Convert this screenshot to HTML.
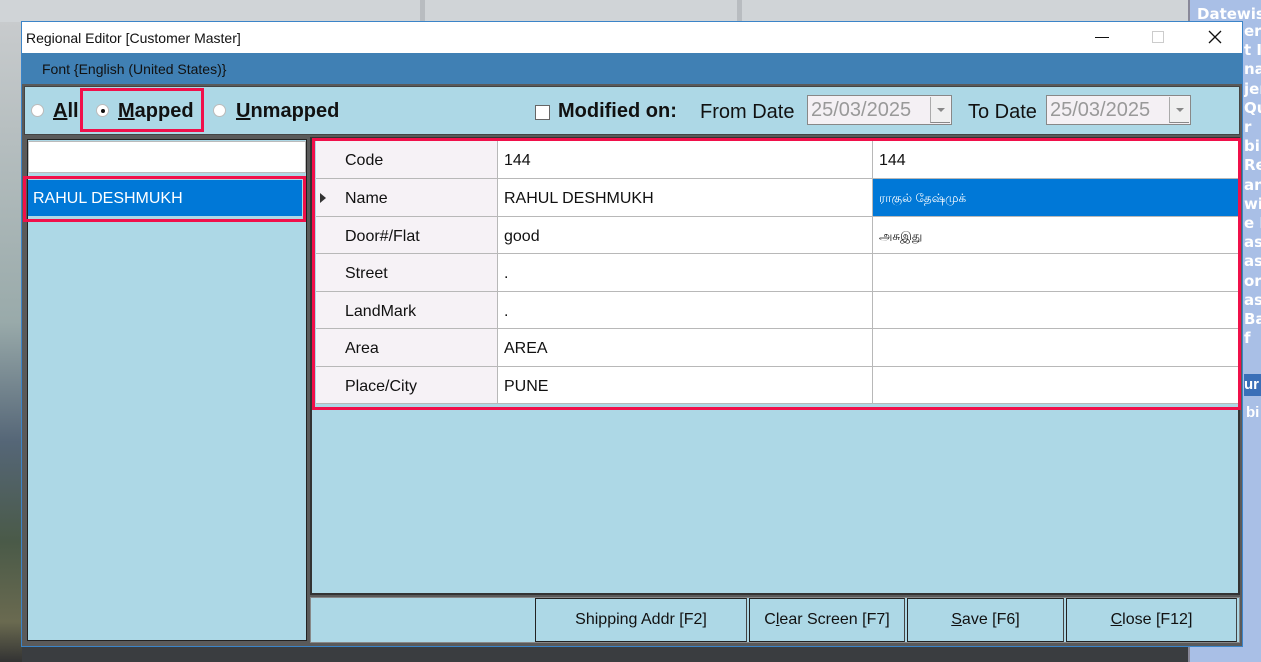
<!DOCTYPE html>
<html><head><meta charset="utf-8"><style>
*{margin:0;padding:0;box-sizing:border-box}
body{width:1261px;height:662px;overflow:hidden;position:relative;font-family:"Liberation Sans",sans-serif;background:#cfd3d6}
.a{position:absolute}
.t{font-size:16px;color:#111}
.row{position:absolute;left:316px;width:922px;border-bottom:1px solid #b8b8b8;background:#fff}
.c1{position:absolute;left:0;width:182px;height:100%;background:#f6f2f6;border-right:1px solid #b8b8b8}
.c2{position:absolute;left:182px;width:375px;height:100%;background:#fff;border-right:1px solid #b8b8b8}
.c3{position:absolute;left:557px;width:365px;height:100%;background:#fff}
.lbl{position:absolute;left:29px;top:11px;font-size:16px;color:#111}
.val{position:absolute;left:6px;top:11px;font-size:16px;color:#111}
.btn{position:absolute;top:598px;height:44px;border:1px solid #222;border-right-color:#444;background:#add8e6;font-size:16px;text-align:center;line-height:42px;color:#111}
.rb{position:absolute;width:13px;height:13px;border-radius:50%;background:#fff;border:1px solid #bbb}
.opt{position:absolute;top:100px;font-size:20px;font-weight:bold;color:#111}
</style></head><body>
<div class="a" style="left:0;top:0;width:1190px;height:22px;background:#d0d4d7"></div>
<div class="a" style="left:420px;top:0;width:5px;height:22px;background:#b8bcc0"></div>
<div class="a" style="left:737px;top:0;width:5px;height:22px;background:#b8bcc0"></div>
<div class="a" style="left:0;top:22px;width:22px;height:640px;background:linear-gradient(#c8cbcd,#9aa 300px,#567 420px,#4a5a48 520px,#6a6a50 600px,#333)"></div>
<div class="a" style="left:22px;top:646px;width:1170px;height:16px;background:#3a3d40"></div>
<div class="a" style="left:1188px;top:0;width:73px;height:662px;background:#a9bfe6;border-left:2px solid #889"></div>
<div class="a" style="left:1197px;top:5px;color:#fff;font-weight:bold;font-size:15px;font-family:'DejaVu Sans',sans-serif">Datewis</div>
<div class="a" style="left:1244px;top:22px;width:17px;color:#fff;font-weight:bold;font-size:15px;line-height:19.2px;font-family:'DejaVu Sans',sans-serif;overflow:hidden;white-space:nowrap">ery<br>t I<br>na<br>jen<br>Qu<br>r<br>bi<br>Re<br>an<br>wis<br>e R<br>as<br>as<br>or<br>as<br>Ba<br>f</div>
<div class="a" style="left:1244px;top:374px;width:17px;height:22px;background:#3a6fb8;color:#fff;font-weight:bold;font-size:15px;line-height:22px">ur</div>
<div class="a" style="left:1246px;top:404px;color:#fff;font-weight:bold;font-size:15px">bi</div>

<div class="a" style="left:21px;top:21px;width:1222px;height:626px;border:1px solid #3b84c8;background:#5a5a5a"></div>
<div class="a" style="left:22px;top:22px;width:1220px;height:31px;background:#fff"></div>
<div class="a" style="left:26px;top:30px;font-size:14px;color:#111">Regional Editor [Customer Master]</div>
<div class="a" style="left:1095px;top:37px;width:14px;height:1px;background:#111"></div>
<div class="a" style="left:1152px;top:31px;width:12px;height:12px;border:1px solid #ccc"></div>
<svg class="a" style="left:1208px;top:30px" width="14" height="14"><path d="M1 1L13 13M13 1L1 13" stroke="#111" stroke-width="1.3"/></svg>
<div class="a" style="left:22px;top:53px;width:1220px;height:31px;background:#4080b4"></div>
<div class="a" style="left:42px;top:61px;font-size:14px;color:#111">Font {English (United States)}</div>

<div class="a" style="left:24px;top:86px;width:1216px;height:49px;background:#add8e6;border:1px solid #444"></div>
<div class="rb" style="left:31px;top:104px"></div>
<div class="opt" style="left:53px"><u>A</u>ll</div>
<div class="a" style="left:80px;top:88px;width:124px;height:44px;border:3px solid #f0104a"></div>
<div class="rb" style="left:96px;top:104px"></div><div class="a" style="left:101px;top:109px;width:4px;height:4px;border-radius:50%;background:#111"></div>
<div class="opt" style="left:118px"><u>M</u>apped</div>
<div class="rb" style="left:213px;top:104px"></div>
<div class="opt" style="left:236px"><u>U</u>nmapped</div>
<div class="a" style="left:535px;top:105px;width:15px;height:15px;background:#fff;border:1px solid #666"></div>
<div class="opt" style="left:558px">Modified on:</div>
<div class="a t" style="left:700px;top:101px;font-size:20px">From Date</div>
<div class="a" style="left:807px;top:95px;width:145px;height:30px;background:#f4f0f4;border:1px solid #888;color:#999;font-size:20px;padding:3px 0 0 3px">25/03/2025<div class="a" style="right:1px;top:1px;width:20px;height:26px;background:#f0f0f0;border-left:1px solid #aaa;border-bottom:1px solid #888"><div class="a" style="left:6px;top:11px;border:4px solid transparent;border-top-color:#888"></div></div></div>
<div class="a t" style="left:968px;top:101px;font-size:20px">To Date</div>
<div class="a" style="left:1046px;top:95px;width:145px;height:30px;background:#f4f0f4;border:1px solid #888;color:#999;font-size:20px;padding:3px 0 0 3px">25/03/2025<div class="a" style="right:1px;top:1px;width:20px;height:26px;background:#f0f0f0;border-left:1px solid #aaa;border-bottom:1px solid #888"><div class="a" style="left:6px;top:11px;border:4px solid transparent;border-top-color:#888"></div></div></div>

<div class="a" style="left:27px;top:139px;width:280px;height:502px;background:#add8e6;border:1px solid #222"></div>
<div class="a" style="left:28px;top:141px;width:278px;height:32px;background:#fff;border:1px solid #bbb"></div>
<div class="a" style="left:23px;top:176px;width:283px;height:46px;border:3px solid #f0104a"></div>
<div class="a" style="left:28px;top:180px;width:274px;height:36px;background:#0078d7;color:#fff;font-size:16px;padding:10px 0 0 5px">RAHUL DESHMUKH</div>

<div class="a" style="left:310px;top:137px;width:930px;height:458px;background:#add8e6;border:2px solid #333"></div>
<div class="a" style="left:312px;top:138px;width:929px;height:272px;border:3px solid #f0104a;background:#add8e6"></div>
<div class="row" style="top:141px;height:38px"><div class="c1"><span class="lbl">Code</span></div><div class="c2"><span class="val">144</span></div><div class="c3"><span class="val">144</span></div></div>
<div class="row" style="top:179px;height:38px"><div class="c1"><div class="a" style="left:4px;top:14px;border:5px solid transparent;border-left:6px solid #333"></div><span class="lbl">Name</span></div><div class="c2"><span class="val">RAHUL DESHMUKH</span></div><div class="c3" style="background:#0078d7"><span class="val" style="color:#fff;font-size:12px;top:12px">ராகுல் தேஷ்முக்</span></div></div>
<div class="row" style="top:217px;height:37px"><div class="c1"><span class="lbl">Door#/Flat</span></div><div class="c2"><span class="val">good</span></div><div class="c3"><span class="val" style="font-size:12px;top:12px">அசுஇது</span></div></div>
<div class="row" style="top:254px;height:38px"><div class="c1"><span class="lbl">Street</span></div><div class="c2"><span class="val">.</span></div><div class="c3"></div></div>
<div class="row" style="top:292px;height:37px"><div class="c1"><span class="lbl">LandMark</span></div><div class="c2"><span class="val">.</span></div><div class="c3"></div></div>
<div class="row" style="top:329px;height:38px"><div class="c1"><span class="lbl">Area</span></div><div class="c2"><span class="val">AREA</span></div><div class="c3"></div></div>
<div class="row" style="top:367px;height:37px"><div class="c1"><span class="lbl">Place/City</span></div><div class="c2"><span class="val">PUNE</span></div><div class="c3"></div></div>

<div class="a" style="left:310px;top:597px;width:930px;height:46px;background:#add8e6;border:1px solid #888"></div>
<div class="btn" style="left:535px;width:212px">Shipping Addr [F2]</div>
<div class="btn" style="left:749px;width:156px">C<u>l</u>ear Screen [F7]</div>
<div class="btn" style="left:907px;width:157px"><u>S</u>ave [F6]</div>
<div class="btn" style="left:1066px;width:171px"><u>C</u>lose [F12]</div>
</body></html>
